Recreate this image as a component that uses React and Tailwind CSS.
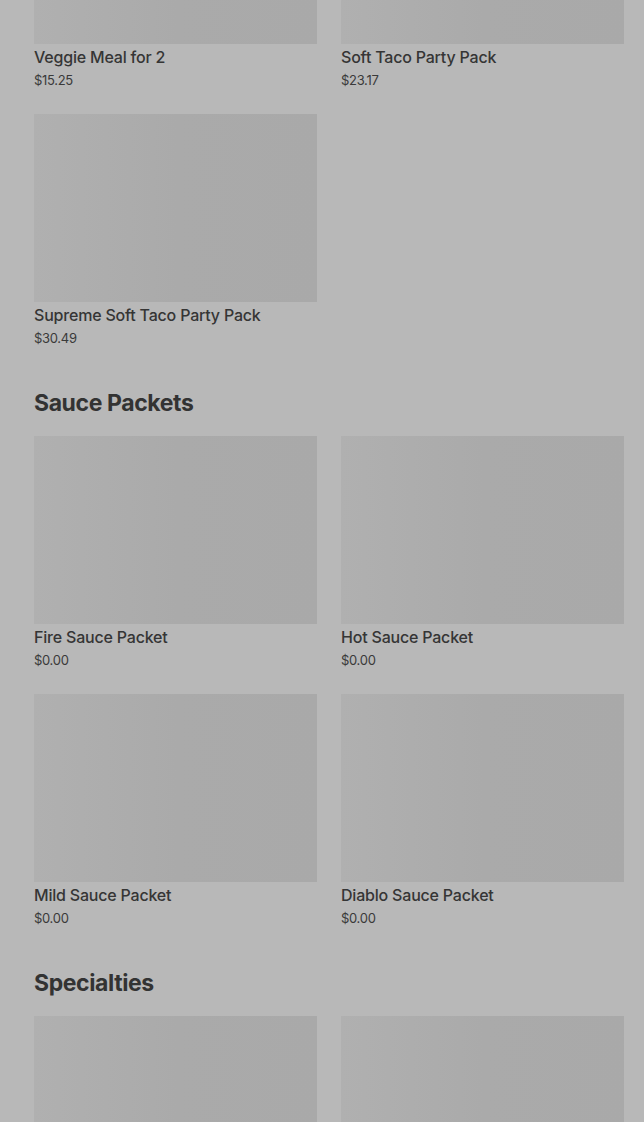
import React from "react";

const sections = [
  {
    title: null,
    items: [
      { name: "Veggie Meal for 2", price: "$15.25" },
      { name: "Soft Taco Party Pack", price: "$23.17" },
      { name: "Supreme Soft Taco Party Pack", price: "$30.49" },
    ],
  },
  {
    title: "Sauce Packets",
    items: [
      { name: "Fire Sauce Packet", price: "$0.00" },
      { name: "Hot Sauce Packet", price: "$0.00" },
      { name: "Mild Sauce Packet", price: "$0.00" },
      { name: "Diablo Sauce Packet", price: "$0.00" },
    ],
  },
  {
    title: "Specialties",
    items: [
      { name: null, price: null, key: "s1" },
      { name: null, price: null, key: "s2" },
    ],
  },
];

function Card({ item }) {
  return (
    <div className="flex flex-col">
      <div className="h-[188px] w-full bg-gradient-to-r from-[#b0b0b0] via-[#aaaaaa] to-[#a9a9a9]" />
      {item.name && (
        <>
          <div className="mt-[2px] h-[22px] text-[16px] leading-[22px] font-medium tracking-[-0.2px] text-[#353535] truncate">
            {item.name}
          </div>
          <div className="h-[24px] text-[13px] leading-[24px] tracking-[-0.3px] text-[#3a3a3a]">
            {item.price}
          </div>
        </>
      )}
    </div>
  );
}

export default function App() {
  return (
    <div
      className="h-[1122px] w-full overflow-hidden bg-[#b8b8b8]"
      style={{ fontFamily: "Inter, 'Noto Sans', sans-serif" }}
    >
      <div className="-mt-[144px] pl-[34px] pr-[20px]">
        {sections.map((s, i) => (
          <div key={i} className={i > 0 ? "mt-[39px]" : ""}>
            {s.title && (
              <h2 className="mb-[19px] h-[28px] text-[23px] leading-[28px] font-bold tracking-[-0.4px] text-[#333333]">
                {s.title}
              </h2>
            )}
            <div className="grid grid-cols-2 gap-x-6 gap-y-[22px]">
              {s.items.map((it, j) => (
                <Card key={j} item={it} />
              ))}
            </div>
          </div>
        ))}
      </div>
    </div>
  );
}
